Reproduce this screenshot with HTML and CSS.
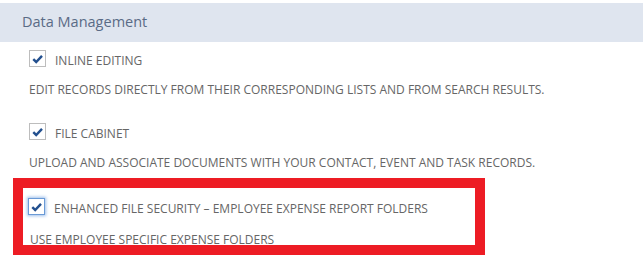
FILE: index.html
```html
<!DOCTYPE html>
<html lang="en">
<head>
    <meta charset="UTF-8">
    <title>Data Management</title>
    <link rel="stylesheet" href="styles.css">
</head>
<body>
    <div class="section-header">Data Management</div>

    <div class="option">
        <div class="option-row">
            <span class="checkbox">
                <svg viewBox="0 0 16 16" width="16" height="16"><path d="M3.5 8.2 L6.6 11.2 L12.8 4.6"/></svg>
            </span>
            <span class="option-label">INLINE EDITING</span>
        </div>
        <div class="option-desc">EDIT RECORDS DIRECTLY FROM THEIR CORRESPONDING LISTS AND FROM SEARCH RESULTS.</div>
    </div>

    <div class="option">
        <div class="option-row">
            <span class="checkbox">
                <svg viewBox="0 0 16 16" width="16" height="16"><path d="M3.5 8.2 L6.6 11.2 L12.8 4.6"/></svg>
            </span>
            <span class="option-label">FILE CABINET</span>
        </div>
        <div class="option-desc">UPLOAD AND ASSOCIATE DOCUMENTS WITH YOUR CONTACT, EVENT AND TASK RECORDS.</div>
    </div>

    <div class="highlight">
        <div class="option-row">
            <span class="checkbox focused">
                <svg viewBox="0 0 16 16" width="16" height="16"><path d="M3.5 8.2 L6.6 11.2 L12.8 4.6"/></svg>
            </span>
            <span class="option-label">ENHANCED FILE SECURITY – EMPLOYEE EXPENSE REPORT FOLDERS</span>
        </div>
        <div class="option-desc">USE EMPLOYEE SPECIFIC EXPENSE FOLDERS</div>
    </div>
</body>
</html>
```

FILE: styles.css
```css
body {
    margin: 0;
    font-family: 'Open Sans', 'Liberation Sans', sans-serif;
    color: #666;
    background: #fff;
}
.section-header {
    margin-top: 3px;
    width: 621px;
    height: 39px;
    line-height: 38px;
    padding-left: 22px;
    background-color: #dfe5ef;
    color: #5a6b86;
    font-size: 14.5px;
}
.option {
    padding-left: 29px;
}
.option-row {
    display: flex;
    align-items: flex-end;
    height: 18px;
    margin-top: 7px;
}
.checkbox {
    box-sizing: border-box;
    width: 17px;
    height: 17px;
    border: 1px solid #bdbdbd;
    background: #fff;
    display: flex;
    align-items: center;
    justify-content: center;
}
.checkbox svg {
    fill: none;
    stroke: #23508f;
    stroke-width: 2.6;
}
.checkbox.focused {
    border-color: #6a9ad6;
    box-shadow: 0 0 3px 1px #9dbfeb;
}
.option-label {
    margin-left: 9px;
    margin-bottom: -2px;
    font-size: 12px;
    line-height: 16px;
}
.option-desc {
    font-size: 12px;
    line-height: 16px;
    margin-top: 15px;
    margin-bottom: 24px;
}
.highlight {
    width: 447px;
    height: 57px;
    margin-left: 13px;
    margin-top: -17px;
    border: 10px solid #ed1c24;
    padding-left: 5px;
    box-sizing: content-box;
    overflow: hidden;
}
.highlight .option-row {
    margin-top: 9px;
}
.highlight .option-desc {
    margin-top: 17px;
    margin-left: 2px;
    margin-bottom: 0;
}
```
